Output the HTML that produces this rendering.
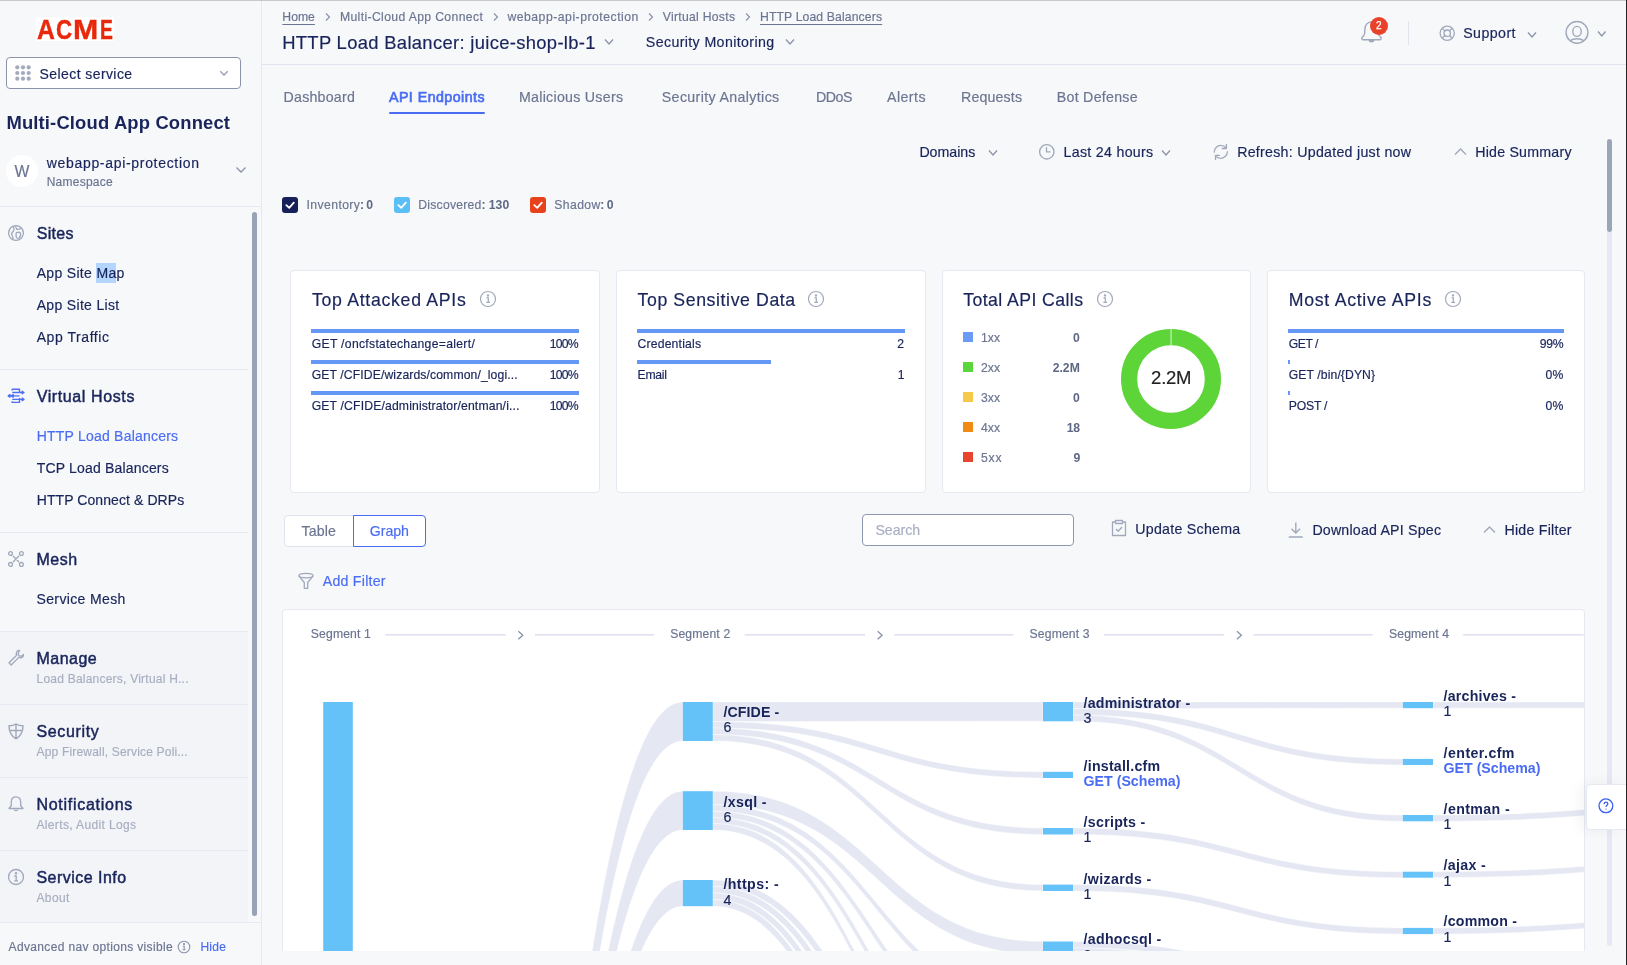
<!DOCTYPE html>
<html><head><meta charset="utf-8"><title>API Endpoints</title>
<style>
html,body{margin:0;padding:0;width:1627px;height:965px;overflow:hidden;background:#f7f8fa;}
body{position:relative;font-family:"Liberation Sans",sans-serif;}
.t{position:absolute;white-space:nowrap;}
svg text{font-family:"Liberation Sans",sans-serif;}
</style></head><body>
<div style="position:absolute;left:0px;top:0px;width:261px;height:965px;background:#f7f8fa;"></div>
<div style="position:absolute;left:0px;top:631px;width:248px;height:291px;background:#f3f4f8;"></div>
<div style="position:absolute;left:261px;top:0px;width:1px;height:965px;background:#e7e9f2;"></div>
<div style="position:absolute;left:36px;top:17px;width:78px;height:24px;background:#ffffff;"></div>
<div style="position:absolute;left:6px;top:57px;width:235px;height:32px;background:#ffffff;box-sizing:border-box;border:1px solid #8a93a9;border-radius:4px;"></div>
<svg style="position:absolute;left:14.8px;top:64.6px" width="17" height="17"><circle cx="2.3" cy="2.3" r="2.1" fill="#a3aabb"/><circle cx="8.0" cy="2.3" r="2.1" fill="#a3aabb"/><circle cx="13.7" cy="2.3" r="2.1" fill="#a3aabb"/><circle cx="2.3" cy="8.0" r="2.1" fill="#a3aabb"/><circle cx="8.0" cy="8.0" r="2.1" fill="#a3aabb"/><circle cx="13.7" cy="8.0" r="2.1" fill="#a3aabb"/><circle cx="2.3" cy="13.7" r="2.1" fill="#a3aabb"/><circle cx="8.0" cy="13.7" r="2.1" fill="#a3aabb"/><circle cx="13.7" cy="13.7" r="2.1" fill="#a3aabb"/></svg>
<svg style="position:absolute;left:218.9px;top:69.5px" width="11" height="7"><path d="M1.3 1.2 L5 5 L8.7 1.2" stroke="#949cb0" stroke-width="1.3" fill="none"/></svg>
<div style="position:absolute;left:6px;top:155px;width:32px;height:32px;background:#ffffff;border-radius:50%;"></div>
<svg style="position:absolute;left:235px;top:166px" width="12" height="9"><path d="M1.5 1.5 L6 6 L10.5 1.5" stroke="#8a93aa" stroke-width="1.3" fill="none"/></svg>
<div style="position:absolute;left:0px;top:206px;width:261px;height:1px;background:#e7e9f2;"></div>
<svg style="position:absolute;left:7px;top:224px" width="18" height="18" viewBox="0 0 18 18" fill="none" stroke="#a0a8bb" stroke-width="1.3" stroke-linejoin="round"><circle cx="9" cy="9" r="7.4"/><path d="M5.6 2.6 C7.2 3.8 7.6 5.6 6.2 7.3 C4.8 8.9 3.6 9.8 5.2 11.6 C6.2 12.7 6.2 14 5.9 15.6"/><path d="M8.4 1.7 C8.8 3.2 9.2 4.6 9.8 5.3 C11 5.6 12.6 5.2 14.2 4.2"/><path d="M9.3 8.6 C10.5 8.2 12.3 8.2 13.2 8.8 C13.9 10.2 13.3 12.8 12.2 14 C11 14.6 9.8 14.2 9.3 13.2 C9 11.6 9 10 9.3 8.6 Z"/></svg>
<div style="position:absolute;left:96px;top:263px;width:20px;height:20px;background:#b4d5fe;"></div>
<div style="position:absolute;left:0px;top:369px;width:248px;height:1px;background:#e7e9f2;"></div>
<svg style="position:absolute;left:7px;top:388px" width="18" height="16" viewBox="0 0 18 16" fill="none" stroke="#4f6ff5" stroke-width="1.4" stroke-linejoin="round"><path d="M5.2 2.6 V1.3 H12.5 V5.3 M5.2 4.5 H15.5 M12.5 7.9 H3 M5.2 11.4 H15.5 M5.2 13.2 V14.4 H12.5 V10"/><path d="M15.2 3.3 L17 4.5 L15.2 5.7 Z M15.2 10.2 L17 11.4 L15.2 12.6 Z M3 6.7 L1.2 7.9 L3 9.1 Z M6.2 6.7 L4.4 7.9 L6.2 9.1 Z" fill="#4f6ff5"/></svg>
<div style="position:absolute;left:0px;top:532px;width:248px;height:1px;background:#e7e9f2;"></div>
<svg style="position:absolute;left:7px;top:550px" width="18" height="18" viewBox="0 0 18 18" fill="none" stroke="#a0a8bb" stroke-width="1.3" stroke-linecap="round"><circle cx="3.5" cy="3.5" r="1.9"/><circle cx="14.4" cy="3.5" r="1.9"/><circle cx="3.5" cy="14.4" r="1.9"/><circle cx="14.4" cy="14.4" r="1.9"/><path d="M6.3 6.3 L11.7 11.7 M11.7 6.3 L6.3 11.7"/></svg>
<div style="position:absolute;left:0px;top:631px;width:248px;height:1px;background:#e7e9f2;"></div>
<svg style="position:absolute;left:7px;top:649px" width="18" height="18" viewBox="0 0 18 18" fill="none" stroke="#a0a8bb" stroke-width="1.3" stroke-linejoin="round"><path d="M12.5 1.5 C10.5 1.3 9 3 9.3 5 L9.6 6.2 L2 13.8 L4.2 16 L11.8 8.4 L13 8.7 C15 9 16.7 7.5 16.5 5.5 L14.3 7.2 L12.2 6.9 L11 5 L12.5 1.5 Z"/></svg>
<div style="position:absolute;left:0px;top:704px;width:248px;height:1px;background:#e7e9f2;"></div>
<svg style="position:absolute;left:7px;top:723px" width="18" height="17" viewBox="0 0 18 17" fill="none" stroke="#a0a8bb" stroke-width="1.4" stroke-linejoin="round"><path d="M9 1 C11.5 2.5 13.5 2.8 16 2.8 C16 9 14 13 9 15.8 C4 13 2 9 2 2.8 C4.5 2.8 6.5 2.5 9 1 Z M9 1.5 V15.5 M2.3 7.5 H15.7"/></svg>
<div style="position:absolute;left:0px;top:777px;width:248px;height:1px;background:#e7e9f2;"></div>
<svg style="position:absolute;left:7px;top:795px" width="18" height="18" viewBox="0 0 18 18" fill="none" stroke="#a0a8bb" stroke-width="1.3" stroke-linejoin="round"><path d="M9 1.8 C6 1.8 4.3 4 4.3 7 V10.5 L2 13.5 H16 L13.7 10.5 V7 C13.7 4 12 1.8 9 1.8 Z"/><path d="M7.3 14.5 C7.5 16 10.5 16 10.7 14.5" /></svg>
<div style="position:absolute;left:0px;top:850px;width:248px;height:1px;background:#e7e9f2;"></div>
<svg style="position:absolute;left:7px;top:868px" width="18" height="18" viewBox="0 0 18 18" fill="none" stroke="#a0a8bb" stroke-width="1.3"><circle cx="9" cy="9" r="7.5"/><path d="M7.3 8 H9.2 V12.8 M7.3 12.8 H11"/><circle cx="9" cy="5.3" r="0.6" fill="#a0a8bb"/></svg>
<div style="position:absolute;left:0px;top:922px;width:261px;height:1px;background:#e7e9f2;"></div>
<div style="position:absolute;left:0px;top:923px;width:261px;height:42px;background:#f7f8fa;"></div>
<svg style="position:absolute;left:176.5px;top:940px" width="14" height="14" viewBox="0 0 14 14" fill="none" stroke="#8a93aa" stroke-width="1.1"><circle cx="7" cy="7" r="5.8"/><path d="M5.8 6.2 H7.2 V9.8 M5.6 9.8 H8.6"/><circle cx="7" cy="4.1" r="0.5" fill="#8a93aa"/></svg>
<div style="position:absolute;left:252px;top:211.5px;width:5px;height:704px;background:#9aa3b6;border-radius:3px;"></div>
<div style="position:absolute;left:262px;top:0px;width:1365px;height:965px;background:#f7f8fa;"></div>
<div style="position:absolute;left:262px;top:64px;width:1365px;height:1px;background:#e1e4ee;"></div>
<div style="position:absolute;left:0px;top:0px;width:1627px;height:1px;background:#c9c9c9;"></div>
<svg style="position:absolute;left:323.5px;top:11.5px" width="8" height="10"><path d="M2 1.5 L5.5 5 L2 8.5" stroke="#8a93aa" stroke-width="1.2" fill="none"/></svg>
<svg style="position:absolute;left:491.5px;top:11.5px" width="8" height="10"><path d="M2 1.5 L5.5 5 L2 8.5" stroke="#8a93aa" stroke-width="1.2" fill="none"/></svg>
<svg style="position:absolute;left:647px;top:11.5px" width="8" height="10"><path d="M2 1.5 L5.5 5 L2 8.5" stroke="#8a93aa" stroke-width="1.2" fill="none"/></svg>
<svg style="position:absolute;left:743.5px;top:11.5px" width="8" height="10"><path d="M2 1.5 L5.5 5 L2 8.5" stroke="#8a93aa" stroke-width="1.2" fill="none"/></svg>
<svg style="position:absolute;left:603.5px;top:37.5px" width="10" height="8"><path d="M1 1.5 L5.0 6 L9 1.5" stroke="#8a93aa" stroke-width="1.3" fill="none"/></svg>
<svg style="position:absolute;left:785px;top:37.5px" width="10" height="8"><path d="M1 1.5 L5.0 6 L9 1.5" stroke="#8a93aa" stroke-width="1.3" fill="none"/></svg>
<svg style="position:absolute;left:1360px;top:21px" width="24" height="24" viewBox="0 0 24 24" fill="none" stroke="#a0a8bb" stroke-width="1.4" stroke-linejoin="round"><path d="M11.5 1 C8 1 5.3 3.5 5 7.5 L4.6 12.5 C4.5 14 3.5 15 2.2 16.3 C1.3 17.3 1.9 18.8 3.4 18.8 H19.6 C21.1 18.8 21.7 17.3 20.8 16.3 C19.5 15 18.5 14 18.4 12.5 L18 7.5 C17.7 3.5 15 1 11.5 1 Z"/><path d="M9.2 19.4 C9.5 21.4 13.5 21.4 13.8 19.4 Z" fill="#a0a8bb"/></svg>
<div style="position:absolute;left:1370px;top:16.7px;width:18px;height:18px;background:#e8432a;border-radius:50%;"></div>
<div style="position:absolute;left:1408.2px;top:21px;width:1px;height:24px;background:#e1e4ec;"></div>
<svg style="position:absolute;left:1437.5px;top:23.5px" width="18" height="18" viewBox="0 0 18 18" fill="none" stroke="#a0a8bb" stroke-width="1.3"><circle cx="9.2" cy="9.2" r="7.1"/><circle cx="9.2" cy="9.2" r="3.2"/><path d="M4.2 4.2 L6.9 6.9 M14.2 4.2 L11.5 6.9 M4.2 14.2 L6.9 11.5 M14.2 14.2 L11.5 11.5"/></svg>
<svg style="position:absolute;left:1527px;top:30.5px" width="10" height="8"><path d="M1 1.5 L5.0 6 L9 1.5" stroke="#8a93aa" stroke-width="1.3" fill="none"/></svg>
<svg style="position:absolute;left:1564px;top:20px" width="26" height="26" viewBox="0 0 26 26" fill="none" stroke="#a0a8bb" stroke-width="1.4"><circle cx="13" cy="12.4" r="10.9"/><ellipse cx="13" cy="11.4" rx="4.2" ry="5"/><path d="M6.3 20.6 C9.5 18.2 16.5 18.2 19.7 20.6"/></svg>
<svg style="position:absolute;left:1596.5px;top:29.5px" width="9.5" height="8"><path d="M1 1.5 L4.75 6 L8.5 1.5" stroke="#8a93aa" stroke-width="1.3" fill="none"/></svg>
<div style="position:absolute;left:389px;top:112px;width:96px;height:2.3px;background:#4a6cf3;border-radius:1px;"></div>
<svg style="position:absolute;left:987.5px;top:148.5px" width="10" height="8"><path d="M1 1.5 L5.0 6 L9 1.5" stroke="#8a93aa" stroke-width="1.3" fill="none"/></svg>
<svg style="position:absolute;left:1038px;top:143px" width="18" height="18" viewBox="0 0 18 18" fill="none" stroke="#a0a8bb" stroke-width="1.3" stroke-linecap="round"><circle cx="8.8" cy="8.8" r="7.2"/><path d="M8.5 4.6 V8.9 H12"/></svg>
<svg style="position:absolute;left:1161px;top:148.5px" width="10" height="8"><path d="M1 1.5 L5.0 6 L9 1.5" stroke="#8a93aa" stroke-width="1.3" fill="none"/></svg>
<svg style="position:absolute;left:1208px;top:140px" width="24" height="24" viewBox="0 0 24 24" fill="none" stroke="#a0a8bb" stroke-width="1.3" stroke-linecap="round" stroke-linejoin="round"><path d="M6.2 12.2 C6.5 8 9.5 5.3 12.5 5.3 C14.8 5.3 16.8 6.3 18 7.8 M18.4 4.5 V8.5 H14.2 M19.4 11.7 C19.2 15.8 16 18.3 12.5 18.3 C10.5 18.3 8.8 17.4 7.8 16.2 M11.4 15.4 H7.5 V19.4"/></svg>
<svg style="position:absolute;left:1454px;top:147px" width="14" height="9"><path d="M1 7.5 L6.5 2 L12 7.5" stroke="#a0a8bb" stroke-width="1.4" fill="none"/></svg>
<div style="position:absolute;left:282.1px;top:197px;width:16px;height:16px;border-radius:3px;background:#16215a"></div>
<svg style="position:absolute;left:282.1px;top:197px" width="16" height="16"><path d="M4.3 8.2 L7.2 10.8 L11.8 5.6" stroke="#fff" stroke-width="1.8" fill="none" stroke-linecap="round" stroke-linejoin="round"/></svg>
<div style="position:absolute;left:394.2px;top:197px;width:16px;height:16px;border-radius:3px;background:#5bbff7"></div>
<svg style="position:absolute;left:394.2px;top:197px" width="16" height="16"><path d="M4.3 8.2 L7.2 10.8 L11.8 5.6" stroke="#fff" stroke-width="1.8" fill="none" stroke-linecap="round" stroke-linejoin="round"/></svg>
<div style="position:absolute;left:530.3px;top:197px;width:16px;height:16px;border-radius:3px;background:#e8421d"></div>
<svg style="position:absolute;left:530.3px;top:197px" width="16" height="16"><path d="M4.3 8.2 L7.2 10.8 L11.8 5.6" stroke="#fff" stroke-width="1.8" fill="none" stroke-linecap="round" stroke-linejoin="round"/></svg>
<div style="position:absolute;left:290px;top:270px;width:310px;height:223px;background:#ffffff;box-sizing:border-box;border:1px solid #e6e9f1;border-radius:4px;"></div>
<div style="position:absolute;left:616px;top:270px;width:310px;height:223px;background:#ffffff;box-sizing:border-box;border:1px solid #e6e9f1;border-radius:4px;"></div>
<div style="position:absolute;left:942px;top:270px;width:309px;height:223px;background:#ffffff;box-sizing:border-box;border:1px solid #e6e9f1;border-radius:4px;"></div>
<div style="position:absolute;left:1267px;top:270px;width:318px;height:223px;background:#ffffff;box-sizing:border-box;border:1px solid #e6e9f1;border-radius:4px;"></div>
<svg style="position:absolute;left:478.7px;top:290px" width="18" height="18" viewBox="0 0 18 18" fill="none" stroke="#a0a8bb" stroke-width="1.2"><circle cx="9" cy="9" r="7.5"/><path d="M7.5 7.8 H9.3 V12.3 M7.3 12.3 H11"/><circle cx="9" cy="5.4" r="0.6" fill="#a0a8bb"/></svg>
<div style="position:absolute;left:311px;top:329px;width:268px;height:4px;background:#6597f6;"></div>
<div style="position:absolute;left:311px;top:360px;width:268px;height:4px;background:#6597f6;"></div>
<div style="position:absolute;left:311px;top:391px;width:268px;height:4px;background:#6597f6;"></div>
<svg style="position:absolute;left:807.3px;top:290px" width="18" height="18" viewBox="0 0 18 18" fill="none" stroke="#a0a8bb" stroke-width="1.2"><circle cx="9" cy="9" r="7.5"/><path d="M7.5 7.8 H9.3 V12.3 M7.3 12.3 H11"/><circle cx="9" cy="5.4" r="0.6" fill="#a0a8bb"/></svg>
<div style="position:absolute;left:637px;top:329px;width:268px;height:4px;background:#6597f6;"></div>
<div style="position:absolute;left:637px;top:360px;width:134px;height:4px;background:#6597f6;"></div>
<svg style="position:absolute;left:1095.6px;top:290px" width="18" height="18" viewBox="0 0 18 18" fill="none" stroke="#a0a8bb" stroke-width="1.2"><circle cx="9" cy="9" r="7.5"/><path d="M7.5 7.8 H9.3 V12.3 M7.3 12.3 H11"/><circle cx="9" cy="5.4" r="0.6" fill="#a0a8bb"/></svg>
<div style="position:absolute;left:963px;top:332px;width:10px;height:10px;background:#6a9bf6;"></div>
<div style="position:absolute;left:963px;top:362px;width:10px;height:10px;background:#5bd63a;"></div>
<div style="position:absolute;left:963px;top:392px;width:10px;height:10px;background:#f6c94b;"></div>
<div style="position:absolute;left:963px;top:422px;width:10px;height:10px;background:#f08a12;"></div>
<div style="position:absolute;left:963px;top:452px;width:10px;height:10px;background:#e8452f;"></div>
<svg style="position:absolute;left:1121px;top:328.7px" width="100" height="100" viewBox="0 0 100 100"><circle cx="50" cy="50" r="41.9" fill="none" stroke="#5dd539" stroke-width="16.2"/><rect x="49.6" y="0" width="0.9" height="17" fill="#e8f7e2"/></svg>
<svg style="position:absolute;left:1444px;top:290px" width="18" height="18" viewBox="0 0 18 18" fill="none" stroke="#a0a8bb" stroke-width="1.2"><circle cx="9" cy="9" r="7.5"/><path d="M7.5 7.8 H9.3 V12.3 M7.3 12.3 H11"/><circle cx="9" cy="5.4" r="0.6" fill="#a0a8bb"/></svg>
<div style="position:absolute;left:1288px;top:329px;width:276px;height:4px;background:#6597f6;"></div>
<div style="position:absolute;left:1288px;top:360px;width:2px;height:4px;background:#6597f6;"></div>
<div style="position:absolute;left:1288px;top:391px;width:2px;height:4px;background:#6597f6;"></div>
<div style="position:absolute;left:283.7px;top:515.1px;width:142.2px;height:31.5px;background:#ffffff;box-sizing:border-box;border:1px solid #e0e3ee;border-radius:4px;"></div>
<div style="position:absolute;left:353.1px;top:515.1px;width:72.8px;height:31.5px;background:#ffffff;box-sizing:border-box;border:1.5px solid #4a6cf3;border-radius:0 4px 4px 0;"></div>
<svg style="position:absolute;left:297px;top:572px" width="18" height="18" viewBox="0 0 18 18" fill="none" stroke="#a0a8bb" stroke-width="1.3" stroke-linejoin="round"><ellipse cx="9" cy="3.6" rx="7.2" ry="2.3"/><path d="M1.8 3.8 L7.3 10.5 V16.3 H10.7 V10.5 L16.2 3.8"/></svg>
<div style="position:absolute;left:862.4px;top:514.3px;width:211.4px;height:31.3px;background:#ffffff;box-sizing:border-box;border:1px solid #8f98ae;border-radius:4px;"></div>
<svg style="position:absolute;left:1110px;top:519px" width="18" height="18" viewBox="0 0 18 18" fill="none" stroke="#a0a8bb" stroke-width="1.3" stroke-linejoin="round"><path d="M5.5 3 H2.5 V16.5 H15.5 V3 H12.5"/><rect x="5.5" y="1.5" width="7" height="3"/><path d="M6 10 L8.2 12.2 L12 8"/></svg>
<svg style="position:absolute;left:1287px;top:521px" width="18" height="18" viewBox="0 0 18 18" fill="none" stroke="#a0a8bb" stroke-width="1.4"><path d="M8.8 1.5 V12 M4.5 7.8 L8.8 12 L13.1 7.8 M1.8 16 H15.8"/></svg>
<svg style="position:absolute;left:1483px;top:525px" width="14" height="9"><path d="M1 7.5 L6.5 2 L12 7.5" stroke="#a0a8bb" stroke-width="1.4" fill="none"/></svg>
<div style="position:absolute;left:282px;top:609px;width:1303px;height:341.9px;overflow:hidden;background:#fff;border:1px solid #e6e9f1;border-bottom:none;box-sizing:border-box;border-radius:4px 4px 0 0"><svg style="position:absolute;left:-283px;top:-610px" width="1627" height="965"><g fill="#e5e8f3" stroke="#ffffff" stroke-width="0.4"><path d="M352.80 2609.59 C517.80 2609.59 517.80 702.00 682.80 702.00 L682.80 741.00 C517.80 741.00 517.80 2707.10 352.80 2707.10 Z"/><path d="M352.80 2685.49 C517.80 2685.49 517.80 791.20 682.80 791.20 L682.80 830.00 C517.80 830.00 517.80 2710.82 352.80 2710.82 Z"/><path d="M352.80 2719.17 C517.80 2719.17 517.80 880.00 682.80 880.00 L682.80 906.20 C517.80 906.20 517.80 2811.35 352.80 2811.35 Z"/><path d="M712.80 702.00 C877.90 702.00 877.90 702.00 1043.00 702.00 L1043.00 721.30 C877.90 721.30 877.90 721.50 712.80 721.50 Z"/><path d="M712.80 721.50 C877.90 721.50 877.90 771.80 1043.00 771.80 L1043.00 778.00 C877.90 778.00 877.90 728.00 712.80 728.00 Z"/><path d="M712.80 728.00 C877.90 728.00 877.90 828.00 1043.00 828.00 L1043.00 834.50 C877.90 834.50 877.90 734.50 712.80 734.50 Z"/><path d="M712.80 734.50 C877.90 734.50 877.90 884.60 1043.00 884.60 L1043.00 891.00 C877.90 891.00 877.90 741.00 712.80 741.00 Z"/><path d="M712.80 791.20 C877.90 791.20 877.90 941.50 1043.00 941.50 L1043.00 954.50 C877.90 954.50 877.90 804.70 712.80 804.70 Z"/><path d="M712.80 804.70 C877.90 804.70 877.90 1003.91 1043.00 1003.91 L1043.00 1010.64 C877.90 1010.64 877.90 811.20 712.80 811.20 Z"/><path d="M712.80 811.20 C877.90 811.20 877.90 1060.79 1043.00 1060.79 L1043.00 1069.54 C877.90 1069.54 877.90 817.30 712.80 817.30 Z"/><path d="M712.80 817.30 C877.90 817.30 877.90 1116.66 1043.00 1116.66 L1043.00 1127.22 C877.90 1127.22 877.90 823.50 712.80 823.50 Z"/><path d="M712.80 823.50 C877.90 823.50 877.90 1175.34 1043.00 1175.34 L1043.00 1185.26 C877.90 1185.26 877.90 830.00 712.80 830.00 Z"/><path d="M712.80 880.00 C877.90 880.00 877.90 1230.81 1043.00 1230.81 L1043.00 1258.75 C877.90 1258.75 877.90 886.50 712.80 886.50 Z"/><path d="M712.80 886.50 C877.90 886.50 877.90 1287.64 1043.00 1287.64 L1043.00 1314.84 C877.90 1314.84 877.90 893.00 712.80 893.00 Z"/><path d="M712.80 893.00 C877.90 893.00 877.90 1352.16 1043.00 1352.16 L1043.00 1383.39 C877.90 1383.39 877.90 899.60 712.80 899.60 Z"/><path d="M712.80 899.60 C877.90 899.60 877.90 1413.60 1043.00 1413.60 L1043.00 1448.38 C877.90 1448.38 877.90 906.20 712.80 906.20 Z"/><path d="M1073.00 702.00 C1237.90 702.00 1237.90 702.00 1402.80 702.00 L1402.80 708.20 C1237.90 708.20 1237.90 708.50 1073.00 708.50 Z"/><path d="M1073.00 708.50 C1237.90 708.50 1237.90 758.90 1402.80 758.90 L1402.80 765.00 C1237.90 765.00 1237.90 715.00 1073.00 715.00 Z"/><path d="M1073.00 715.00 C1237.90 715.00 1237.90 815.00 1402.80 815.00 L1402.80 821.30 C1237.90 821.30 1237.90 721.30 1073.00 721.30 Z"/><path d="M1073.00 828.00 C1237.90 828.00 1237.90 871.70 1402.80 871.70 L1402.80 877.70 C1237.90 877.70 1237.90 834.50 1073.00 834.50 Z"/><path d="M1073.00 884.60 C1237.90 884.60 1237.90 927.90 1402.80 927.90 L1402.80 934.10 C1237.90 934.10 1237.90 891.00 1073.00 891.00 Z"/><path d="M1073.00 941.50 C1237.90 941.50 1237.90 985.73 1402.80 985.73 L1402.80 992.23 C1237.90 992.23 1237.90 948.00 1073.00 948.00 Z"/><path d="M1073.00 948.00 C1237.90 948.00 1237.90 1005.39 1402.80 1005.39 L1402.80 1011.89 C1237.90 1011.89 1237.90 954.50 1073.00 954.50 Z"/><path d="M1433.00 702.00 C1597.80 702.00 1597.80 702.00 1762.60 702.00 L1762.60 708.20 C1597.80 708.20 1597.80 708.20 1433.00 708.20 Z"/><path d="M1433.00 815.00 C1597.80 815.00 1597.80 801.80 1762.60 801.80 L1762.60 808.10 C1597.80 808.10 1597.80 821.30 1433.00 821.30 Z"/><path d="M1433.00 871.70 C1597.80 871.70 1597.80 858.50 1762.60 858.50 L1762.60 864.50 C1597.80 864.50 1597.80 877.70 1433.00 877.70 Z"/><path d="M1433.00 927.90 C1597.80 927.90 1597.80 914.70 1762.60 914.70 L1762.60 920.90 C1597.80 920.90 1597.80 934.10 1433.00 934.10 Z"/></g><g fill="#64c2f9"><rect x="323.20" y="702.00" width="29.60" height="498.00"/><rect x="682.80" y="702.00" width="30.00" height="39.00"/><rect x="682.80" y="791.20" width="30.00" height="38.80"/><rect x="682.80" y="880.00" width="30.00" height="26.20"/><rect x="1043.00" y="702.00" width="30.00" height="19.30"/><rect x="1043.00" y="771.80" width="30.00" height="6.20"/><rect x="1043.00" y="828.00" width="30.00" height="6.50"/><rect x="1043.00" y="884.60" width="30.00" height="6.40"/><rect x="1043.00" y="941.50" width="30.00" height="13.00"/><rect x="1402.80" y="702.00" width="30.20" height="6.20"/><rect x="1402.80" y="758.90" width="30.20" height="6.10"/><rect x="1402.80" y="815.00" width="30.20" height="6.30"/><rect x="1402.80" y="871.70" width="30.20" height="6.00"/><rect x="1402.80" y="927.90" width="30.20" height="6.20"/></g><rect x="385.3" y="634" width="120.4" height="1.6" fill="#dfe2ee"/><rect x="535.0" y="634" width="119.0" height="1.6" fill="#dfe2ee"/><path d="M518.3 631.2 L522.8 635.2 L518.3 639.2" stroke="#8a93aa" stroke-width="1.3" fill="none"/><rect x="744.6" y="634" width="120.4" height="1.6" fill="#dfe2ee"/><rect x="894.3" y="634" width="119.0" height="1.6" fill="#dfe2ee"/><path d="M877.6 631.2 L882.1 635.2 L877.6 639.2" stroke="#8a93aa" stroke-width="1.3" fill="none"/><rect x="1103.9" y="634" width="120.4" height="1.6" fill="#dfe2ee"/><rect x="1253.6" y="634" width="119.0" height="1.6" fill="#dfe2ee"/><path d="M1236.9 631.2 L1241.4 635.2 L1236.9 639.2" stroke="#8a93aa" stroke-width="1.3" fill="none"/><rect x="1463.2" y="634" width="120.4" height="1.6" fill="#dfe2ee"/></svg></div>
<div style="position:absolute;left:1607px;top:231.7px;width:5px;height:714.5px;background:#e6e9f3;border-radius:0 0 3px 3px;"></div>
<div style="position:absolute;left:1607px;top:138.9px;width:5px;height:93px;background:#9ca4b7;border-radius:3px;"></div>
<div style="position:absolute;left:0;top:0;width:1627px;height:965px;will-change:transform"><div id="t0" class="t" style="left:37.20px;top:15.80px;font-size:28.00px;line-height:28.00px;color:#e8280b;font-weight:700;letter-spacing:-1.671px;transform:scaleX(0.885);transform-origin:0 0;-webkit-text-stroke:0.4px #e8280b;">A</div>
<div id="t1" class="t" style="left:56.30px;top:15.80px;font-size:28.00px;line-height:28.00px;color:#e8280b;font-weight:700;letter-spacing:0.411px;transform:scaleX(0.800);transform-origin:0 0;-webkit-text-stroke:0.4px #e8280b;">C</div>
<div id="t2" class="t" style="left:72.60px;top:15.80px;font-size:28.00px;line-height:28.00px;color:#e8280b;font-weight:700;letter-spacing:0.165px;transform:scaleX(1.080);transform-origin:0 0;-webkit-text-stroke:0.4px #e8280b;">M</div>
<div id="t3" class="t" style="left:99.80px;top:15.81px;font-size:28.00px;line-height:28.00px;color:#e8280b;font-weight:700;letter-spacing:0.000px;transform:scaleX(0.690);transform-origin:0 0;-webkit-text-stroke:0.4px #e8280b;">E</div>
<div id="t4" class="t" style="left:39.60px;top:67.01px;font-size:14.00px;line-height:14.00px;color:#18245a;font-weight:400;letter-spacing:0.412px;-webkit-text-stroke:0.18px #18245a;">Select service</div>
<div id="t5" class="t" style="left:6.40px;top:114.20px;font-size:18.40px;line-height:18.40px;color:#18245a;font-weight:700;letter-spacing:0.165px;">Multi-Cloud App Connect</div>
<div id="t6" class="t" style="left:22.20px;transform:translateX(-50%);top:163.81px;font-size:15.80px;line-height:15.80px;color:#6b7591;font-weight:400;letter-spacing:0.306px;-webkit-text-stroke:0.18px #6b7591;">W</div>
<div id="t7" class="t" style="left:46.70px;top:156.00px;font-size:14.00px;line-height:14.00px;color:#18245a;font-weight:400;letter-spacing:0.688px;-webkit-text-stroke:0.18px #18245a;">webapp-api-protection</div>
<div id="t8" class="t" style="left:46.70px;top:176.01px;font-size:12.00px;line-height:12.00px;color:#6b7591;font-weight:400;letter-spacing:0.245px;-webkit-text-stroke:0.18px #6b7591;">Namespace</div>
<div id="t9" class="t" style="left:36.70px;top:225.91px;font-size:16.00px;line-height:16.00px;color:#18245a;font-weight:400;letter-spacing:0.306px;-webkit-text-stroke:0.45px #18245a;">Sites</div>
<div id="t10" class="t" style="left:36.70px;top:266.10px;font-size:14.00px;line-height:14.00px;color:#18245a;font-weight:400;letter-spacing:0.323px;-webkit-text-stroke:0.18px #18245a;">App Site Map</div>
<div id="t11" class="t" style="left:36.70px;top:298.01px;font-size:14.00px;line-height:14.00px;color:#18245a;font-weight:400;letter-spacing:0.325px;-webkit-text-stroke:0.18px #18245a;">App Site List</div>
<div id="t12" class="t" style="left:36.70px;top:329.91px;font-size:14.00px;line-height:14.00px;color:#18245a;font-weight:400;letter-spacing:0.562px;-webkit-text-stroke:0.18px #18245a;">App Traffic</div>
<div id="t13" class="t" style="left:36.70px;top:388.81px;font-size:16.00px;line-height:16.00px;color:#18245a;font-weight:400;letter-spacing:0.607px;-webkit-text-stroke:0.45px #18245a;">Virtual Hosts</div>
<div id="t14" class="t" style="left:36.70px;top:429.02px;font-size:14.00px;line-height:14.00px;color:#4a6cf3;font-weight:400;letter-spacing:0.218px;-webkit-text-stroke:0.18px #4a6cf3;">HTTP Load Balancers</div>
<div id="t15" class="t" style="left:36.70px;top:460.60px;font-size:14.00px;line-height:14.00px;color:#18245a;font-weight:400;letter-spacing:0.181px;-webkit-text-stroke:0.18px #18245a;">TCP Load Balancers</div>
<div id="t16" class="t" style="left:36.70px;top:492.52px;font-size:14.00px;line-height:14.00px;color:#18245a;font-weight:400;letter-spacing:0.083px;-webkit-text-stroke:0.18px #18245a;">HTTP Connect &amp; DRPs</div>
<div id="t17" class="t" style="left:36.50px;top:551.91px;font-size:16.00px;line-height:16.00px;color:#18245a;font-weight:400;letter-spacing:0.520px;-webkit-text-stroke:0.45px #18245a;">Mesh</div>
<div id="t18" class="t" style="left:36.50px;top:592.01px;font-size:14.00px;line-height:14.00px;color:#18245a;font-weight:400;letter-spacing:0.371px;-webkit-text-stroke:0.18px #18245a;">Service Mesh</div>
<div id="t19" class="t" style="left:36.50px;top:650.91px;font-size:16.00px;line-height:16.00px;color:#18245a;font-weight:400;letter-spacing:0.473px;-webkit-text-stroke:0.45px #18245a;">Manage</div>
<div id="t20" class="t" style="left:36.50px;top:672.70px;font-size:12.00px;line-height:12.00px;color:#a7aec0;font-weight:400;letter-spacing:0.227px;-webkit-text-stroke:0.18px #a7aec0;">Load Balancers, Virtual H...</div>
<div id="t21" class="t" style="left:36.50px;top:724.00px;font-size:16.00px;line-height:16.00px;color:#18245a;font-weight:400;letter-spacing:0.629px;-webkit-text-stroke:0.45px #18245a;">Security</div>
<div id="t22" class="t" style="left:36.50px;top:746.41px;font-size:12.00px;line-height:12.00px;color:#a7aec0;font-weight:400;letter-spacing:0.184px;-webkit-text-stroke:0.18px #a7aec0;">App Firewall, Service Poli...</div>
<div id="t23" class="t" style="left:36.40px;top:797.11px;font-size:16.00px;line-height:16.00px;color:#18245a;font-weight:400;letter-spacing:0.728px;-webkit-text-stroke:0.45px #18245a;">Notifications</div>
<div id="t24" class="t" style="left:36.40px;top:819.30px;font-size:12.00px;line-height:12.00px;color:#a7aec0;font-weight:400;letter-spacing:0.371px;-webkit-text-stroke:0.18px #a7aec0;">Alerts, Audit Logs</div>
<div id="t25" class="t" style="left:36.40px;top:870.00px;font-size:16.00px;line-height:16.00px;color:#18245a;font-weight:400;letter-spacing:0.482px;-webkit-text-stroke:0.45px #18245a;">Service Info</div>
<div id="t26" class="t" style="left:36.40px;top:891.80px;font-size:12.00px;line-height:12.00px;color:#a7aec0;font-weight:400;letter-spacing:0.410px;-webkit-text-stroke:0.18px #a7aec0;">About</div>
<div id="t27" class="t" style="left:8.60px;top:941.21px;font-size:12.00px;line-height:12.00px;color:#6b7591;font-weight:400;letter-spacing:0.342px;-webkit-text-stroke:0.18px #6b7591;">Advanced nav options visible</div>
<div id="t28" class="t" style="left:200.40px;top:941.21px;font-size:12.00px;line-height:12.00px;color:#4a6cf3;font-weight:400;letter-spacing:0.271px;-webkit-text-stroke:0.18px #4a6cf3;">Hide</div>
<div id="t29" class="t" style="left:282.30px;top:10.71px;font-size:12.20px;line-height:12.20px;color:#6b7591;font-weight:400;letter-spacing:0.028px;text-decoration:underline;text-underline-offset:2.5px;-webkit-text-stroke:0.18px #6b7591;">Home</div>
<div id="t30" class="t" style="left:339.90px;top:10.71px;font-size:12.20px;line-height:12.20px;color:#6b7591;font-weight:400;letter-spacing:0.367px;-webkit-text-stroke:0.18px #6b7591;">Multi-Cloud App Connect</div>
<div id="t31" class="t" style="left:507.40px;top:10.70px;font-size:12.20px;line-height:12.20px;color:#6b7591;font-weight:400;letter-spacing:0.520px;-webkit-text-stroke:0.18px #6b7591;">webapp-api-protection</div>
<div id="t32" class="t" style="left:662.80px;top:10.71px;font-size:12.20px;line-height:12.20px;color:#6b7591;font-weight:400;letter-spacing:0.277px;-webkit-text-stroke:0.18px #6b7591;">Virtual Hosts</div>
<div id="t33" class="t" style="left:760.00px;top:10.72px;font-size:12.20px;line-height:12.20px;color:#6b7591;font-weight:400;letter-spacing:0.128px;text-decoration:underline;text-underline-offset:2.5px;-webkit-text-stroke:0.18px #6b7591;">HTTP Load Balancers</div>
<div id="t34" class="t" style="left:282.20px;top:34.21px;font-size:18.40px;line-height:18.40px;color:#18245a;font-weight:400;letter-spacing:0.325px;-webkit-text-stroke:0.18px #18245a;">HTTP Load Balancer: juice-shop-lb-1</div>
<div id="t35" class="t" style="left:645.80px;top:35.21px;font-size:14.20px;line-height:14.20px;color:#18245a;font-weight:400;letter-spacing:0.381px;-webkit-text-stroke:0.18px #18245a;">Security Monitoring</div>
<div id="t36" class="t" style="left:1379.00px;transform:translateX(-50%);top:21.31px;font-size:10.00px;line-height:10.00px;color:#ffffff;font-weight:400;letter-spacing:0.474px;-webkit-text-stroke:0.25px #fff;">2</div>
<div id="t37" class="t" style="left:1463.20px;top:26.10px;font-size:14.20px;line-height:14.20px;color:#18245a;font-weight:400;letter-spacing:0.433px;-webkit-text-stroke:0.18px #18245a;">Support</div>
<div id="t38" class="t" style="left:283.60px;top:90.31px;font-size:14.20px;line-height:14.20px;color:#6b7591;font-weight:400;letter-spacing:0.223px;-webkit-text-stroke:0.18px #6b7591;">Dashboard</div>
<div id="t39" class="t" style="left:389.00px;top:90.31px;font-size:14.20px;line-height:14.20px;color:#4a6cf3;font-weight:400;letter-spacing:0.473px;-webkit-text-stroke:0.65px #4a6cf3;">API Endpoints</div>
<div id="t40" class="t" style="left:519.00px;top:90.31px;font-size:14.20px;line-height:14.20px;color:#6b7591;font-weight:400;letter-spacing:0.277px;-webkit-text-stroke:0.18px #6b7591;">Malicious Users</div>
<div id="t41" class="t" style="left:661.80px;top:90.31px;font-size:14.20px;line-height:14.20px;color:#6b7591;font-weight:400;letter-spacing:0.365px;-webkit-text-stroke:0.18px #6b7591;">Security Analytics</div>
<div id="t42" class="t" style="left:816.00px;top:90.31px;font-size:14.20px;line-height:14.20px;color:#6b7591;font-weight:400;letter-spacing:-0.451px;-webkit-text-stroke:0.18px #6b7591;">DDoS</div>
<div id="t43" class="t" style="left:887.00px;top:90.31px;font-size:14.20px;line-height:14.20px;color:#6b7591;font-weight:400;letter-spacing:0.446px;-webkit-text-stroke:0.18px #6b7591;">Alerts</div>
<div id="t44" class="t" style="left:961.00px;top:90.31px;font-size:14.20px;line-height:14.20px;color:#6b7591;font-weight:400;letter-spacing:0.151px;-webkit-text-stroke:0.18px #6b7591;">Requests</div>
<div id="t45" class="t" style="left:1056.80px;top:90.32px;font-size:14.20px;line-height:14.20px;color:#6b7591;font-weight:400;letter-spacing:0.272px;-webkit-text-stroke:0.18px #6b7591;">Bot Defense</div>
<div id="t46" class="t" style="left:919.40px;top:145.21px;font-size:14.20px;line-height:14.20px;color:#18245a;font-weight:400;letter-spacing:-0.015px;-webkit-text-stroke:0.18px #18245a;">Domains</div>
<div id="t47" class="t" style="left:1063.50px;top:145.20px;font-size:14.20px;line-height:14.20px;color:#18245a;font-weight:400;letter-spacing:0.310px;-webkit-text-stroke:0.18px #18245a;">Last 24 hours</div>
<div id="t48" class="t" style="left:1237.20px;top:145.31px;font-size:14.20px;line-height:14.20px;color:#18245a;font-weight:400;letter-spacing:0.275px;-webkit-text-stroke:0.18px #18245a;">Refresh: Updated just now</div>
<div id="t49" class="t" style="left:1475.20px;top:145.31px;font-size:14.20px;line-height:14.20px;color:#18245a;font-weight:400;letter-spacing:0.225px;-webkit-text-stroke:0.18px #18245a;">Hide Summary</div>
<div id="t50" class="t" style="left:306.60px;top:198.90px;font-size:12.20px;line-height:12.20px;color:#6b7591;font-weight:400;letter-spacing:0.395px;-webkit-text-stroke:0.18px #6b7591;">Inventory</div>
<div id="t51" class="t" style="left:359.90px;top:198.90px;font-size:12.20px;line-height:12.20px;color:#5e6884;font-weight:700;letter-spacing:-0.567px;">: 0</div>
<div id="t52" class="t" style="left:418.30px;top:198.90px;font-size:12.20px;line-height:12.20px;color:#6b7591;font-weight:400;letter-spacing:0.236px;-webkit-text-stroke:0.18px #6b7591;">Discovered</div>
<div id="t53" class="t" style="left:481.40px;top:198.91px;font-size:12.20px;line-height:12.20px;color:#5e6884;font-weight:700;letter-spacing:0.002px;">: 130</div>
<div id="t54" class="t" style="left:554.30px;top:198.91px;font-size:12.20px;line-height:12.20px;color:#6b7591;font-weight:400;letter-spacing:0.389px;-webkit-text-stroke:0.18px #6b7591;">Shadow</div>
<div id="t55" class="t" style="left:600.30px;top:198.91px;font-size:12.20px;line-height:12.20px;color:#5e6884;font-weight:700;letter-spacing:-0.516px;">: 0</div>
<div id="t56" class="t" style="left:312.00px;top:291.81px;font-size:17.70px;line-height:17.70px;color:#18245a;font-weight:400;letter-spacing:0.701px;-webkit-text-stroke:0.18px #18245a;">Top Attacked APIs</div>
<div id="t57" class="t" style="left:311.70px;top:337.81px;font-size:12.20px;line-height:12.20px;color:#18245a;font-weight:400;letter-spacing:0.301px;-webkit-text-stroke:0.18px #18245a;">GET /oncfstatechange=alert/</div>
<div id="t58" class="t" style="right:1049.20px;top:337.81px;font-size:12.20px;line-height:12.20px;color:#18245a;font-weight:400;letter-spacing:-0.795px;-webkit-text-stroke:0.18px #18245a;">100%</div>
<div id="t59" class="t" style="left:311.70px;top:368.91px;font-size:12.20px;line-height:12.20px;color:#18245a;font-weight:400;letter-spacing:0.110px;-webkit-text-stroke:0.18px #18245a;">GET /CFIDE/wizards/common/_logi...</div>
<div id="t60" class="t" style="right:1049.20px;top:368.91px;font-size:12.20px;line-height:12.20px;color:#18245a;font-weight:400;letter-spacing:-0.791px;-webkit-text-stroke:0.18px #18245a;">100%</div>
<div id="t61" class="t" style="left:311.70px;top:399.81px;font-size:12.20px;line-height:12.20px;color:#18245a;font-weight:400;letter-spacing:0.157px;-webkit-text-stroke:0.18px #18245a;">GET /CFIDE/administrator/entman/i...</div>
<div id="t62" class="t" style="right:1049.20px;top:399.81px;font-size:12.20px;line-height:12.20px;color:#18245a;font-weight:400;letter-spacing:-0.791px;-webkit-text-stroke:0.18px #18245a;">100%</div>
<div id="t63" class="t" style="left:637.50px;top:291.81px;font-size:17.70px;line-height:17.70px;color:#18245a;font-weight:400;letter-spacing:0.601px;-webkit-text-stroke:0.18px #18245a;">Top Sensitive Data</div>
<div id="t64" class="t" style="left:637.50px;top:337.81px;font-size:12.20px;line-height:12.20px;color:#18245a;font-weight:400;letter-spacing:0.184px;-webkit-text-stroke:0.18px #18245a;">Credentials</div>
<div id="t65" class="t" style="right:722.50px;top:337.81px;font-size:12.20px;line-height:12.20px;color:#18245a;font-weight:400;letter-spacing:0.404px;-webkit-text-stroke:0.18px #18245a;">2</div>
<div id="t66" class="t" style="left:637.50px;top:368.91px;font-size:12.20px;line-height:12.20px;color:#18245a;font-weight:400;letter-spacing:-0.246px;-webkit-text-stroke:0.18px #18245a;">Email</div>
<div id="t67" class="t" style="right:722.50px;top:368.91px;font-size:12.20px;line-height:12.20px;color:#18245a;font-weight:400;letter-spacing:0.000px;-webkit-text-stroke:0.18px #18245a;">1</div>
<div id="t68" class="t" style="left:963.30px;top:291.81px;font-size:17.70px;line-height:17.70px;color:#18245a;font-weight:400;letter-spacing:0.404px;-webkit-text-stroke:0.18px #18245a;">Total API Calls</div>
<div id="t69" class="t" style="left:981.10px;top:331.81px;font-size:12.20px;line-height:12.20px;color:#6b7591;font-weight:400;letter-spacing:0.000px;-webkit-text-stroke:0.18px #6b7591;">1xx</div>
<div id="t70" class="t" style="right:547.20px;top:331.81px;font-size:12.20px;line-height:12.20px;color:#5e6884;font-weight:700;letter-spacing:0.000px;">0</div>
<div id="t71" class="t" style="left:981.10px;top:361.81px;font-size:12.20px;line-height:12.20px;color:#6b7591;font-weight:400;letter-spacing:0.000px;-webkit-text-stroke:0.18px #6b7591;">2xx</div>
<div id="t72" class="t" style="right:547.20px;top:361.81px;font-size:12.20px;line-height:12.20px;color:#5e6884;font-weight:700;letter-spacing:0.000px;">2.2M</div>
<div id="t73" class="t" style="left:981.10px;top:391.81px;font-size:12.20px;line-height:12.20px;color:#6b7591;font-weight:400;letter-spacing:0.000px;-webkit-text-stroke:0.18px #6b7591;">3xx</div>
<div id="t74" class="t" style="right:547.20px;top:391.81px;font-size:12.20px;line-height:12.20px;color:#5e6884;font-weight:700;letter-spacing:0.000px;">0</div>
<div id="t75" class="t" style="left:981.10px;top:421.81px;font-size:12.20px;line-height:12.20px;color:#6b7591;font-weight:400;letter-spacing:0.000px;-webkit-text-stroke:0.18px #6b7591;">4xx</div>
<div id="t76" class="t" style="right:547.20px;top:421.82px;font-size:12.20px;line-height:12.20px;color:#5e6884;font-weight:700;letter-spacing:-0.243px;">18</div>
<div id="t77" class="t" style="left:981.10px;top:451.81px;font-size:12.20px;line-height:12.20px;color:#6b7591;font-weight:400;letter-spacing:0.718px;-webkit-text-stroke:0.18px #6b7591;">5xx</div>
<div id="t78" class="t" style="right:547.20px;top:451.81px;font-size:12.20px;line-height:12.20px;color:#5e6884;font-weight:700;letter-spacing:-0.480px;">9</div>
<div id="t79" class="t" style="left:1171.20px;transform:translateX(-50%);top:369.01px;font-size:18.50px;line-height:18.50px;color:#222222;font-weight:400;letter-spacing:-0.247px;-webkit-text-stroke:0.18px #222222;">2.2M</div>
<div id="t80" class="t" style="left:1288.80px;top:292.11px;font-size:17.70px;line-height:17.70px;color:#18245a;font-weight:400;letter-spacing:0.718px;-webkit-text-stroke:0.18px #18245a;">Most Active APIs</div>
<div id="t81" class="t" style="left:1288.80px;top:337.80px;font-size:12.20px;line-height:12.20px;color:#18245a;font-weight:400;letter-spacing:-0.477px;-webkit-text-stroke:0.18px #18245a;">GET /</div>
<div id="t82" class="t" style="right:63.50px;top:337.81px;font-size:12.20px;line-height:12.20px;color:#18245a;font-weight:400;letter-spacing:-0.209px;-webkit-text-stroke:0.18px #18245a;">99%</div>
<div id="t83" class="t" style="left:1288.80px;top:369.01px;font-size:12.20px;line-height:12.20px;color:#18245a;font-weight:400;letter-spacing:0.089px;-webkit-text-stroke:0.18px #18245a;">GET /bin/{DYN}</div>
<div id="t84" class="t" style="right:63.50px;top:369.02px;font-size:12.20px;line-height:12.20px;color:#18245a;font-weight:400;letter-spacing:0.170px;-webkit-text-stroke:0.18px #18245a;">0%</div>
<div id="t85" class="t" style="left:1288.80px;top:399.91px;font-size:12.20px;line-height:12.20px;color:#18245a;font-weight:400;letter-spacing:-0.208px;-webkit-text-stroke:0.18px #18245a;">POST /</div>
<div id="t86" class="t" style="right:63.50px;top:399.90px;font-size:12.20px;line-height:12.20px;color:#18245a;font-weight:400;letter-spacing:0.220px;-webkit-text-stroke:0.18px #18245a;">0%</div>
<div id="t87" class="t" style="left:301.40px;top:524.01px;font-size:14.20px;line-height:14.20px;color:#6b7591;font-weight:400;letter-spacing:0.168px;-webkit-text-stroke:0.18px #6b7591;">Table</div>
<div id="t88" class="t" style="left:369.80px;top:524.01px;font-size:14.20px;line-height:14.20px;color:#4a6cf3;font-weight:400;letter-spacing:-0.084px;-webkit-text-stroke:0.18px #4a6cf3;">Graph</div>
<div id="t89" class="t" style="left:322.80px;top:573.90px;font-size:14.20px;line-height:14.20px;color:#4a6cf3;font-weight:400;letter-spacing:0.221px;-webkit-text-stroke:0.18px #4a6cf3;">Add Filter</div>
<div id="t90" class="t" style="left:875.40px;top:523.01px;font-size:14.20px;line-height:14.20px;color:#a8afc2;font-weight:400;letter-spacing:-0.051px;-webkit-text-stroke:0.18px #a8afc2;">Search</div>
<div id="t91" class="t" style="left:1135.30px;top:522.01px;font-size:14.20px;line-height:14.20px;color:#18245a;font-weight:400;letter-spacing:0.262px;-webkit-text-stroke:0.18px #18245a;">Update Schema</div>
<div id="t92" class="t" style="left:1312.40px;top:523.20px;font-size:14.20px;line-height:14.20px;color:#18245a;font-weight:400;letter-spacing:0.199px;-webkit-text-stroke:0.18px #18245a;">Download API Spec</div>
<div id="t93" class="t" style="left:1504.50px;top:523.20px;font-size:14.20px;line-height:14.20px;color:#18245a;font-weight:400;letter-spacing:0.235px;-webkit-text-stroke:0.18px #18245a;">Hide Filter</div></div>
<div style="position:absolute;left:0;top:0;width:1627px;height:950.9px;overflow:hidden;will-change:transform"><div id="t94" class="t" style="left:310.80px;top:627.90px;font-size:12.20px;line-height:12.20px;color:#6b7591;font-weight:400;letter-spacing:0.131px;-webkit-text-stroke:0.18px #6b7591;">Segment 1</div>
<div id="t95" class="t" style="left:670.20px;top:627.91px;font-size:12.20px;line-height:12.20px;color:#6b7591;font-weight:400;letter-spacing:0.131px;-webkit-text-stroke:0.18px #6b7591;">Segment 2</div>
<div id="t96" class="t" style="left:1029.60px;top:627.92px;font-size:12.20px;line-height:12.20px;color:#6b7591;font-weight:400;letter-spacing:0.131px;-webkit-text-stroke:0.18px #6b7591;">Segment 3</div>
<div id="t97" class="t" style="left:1389.00px;top:627.90px;font-size:12.20px;line-height:12.20px;color:#6b7591;font-weight:400;letter-spacing:0.132px;-webkit-text-stroke:0.18px #6b7591;">Segment 4</div>
<div id="t98" class="t" style="left:723.40px;top:704.81px;font-size:14.20px;line-height:14.20px;color:#18245a;font-weight:700;letter-spacing:0.104px;">/CFIDE -</div>
<div id="t99" class="t" style="left:723.40px;top:720.11px;font-size:14.20px;line-height:14.20px;color:#18245a;font-weight:400;letter-spacing:0.410px;-webkit-text-stroke:0.18px #18245a;">6</div>
<div id="t100" class="t" style="left:723.40px;top:794.61px;font-size:14.20px;line-height:14.20px;color:#18245a;font-weight:700;letter-spacing:0.348px;">/xsql -</div>
<div id="t101" class="t" style="left:723.40px;top:809.91px;font-size:14.20px;line-height:14.20px;color:#18245a;font-weight:400;letter-spacing:0.222px;-webkit-text-stroke:0.18px #18245a;">6</div>
<div id="t102" class="t" style="left:723.40px;top:877.31px;font-size:14.20px;line-height:14.20px;color:#18245a;font-weight:700;letter-spacing:0.411px;">/https: -</div>
<div id="t103" class="t" style="left:723.40px;top:892.60px;font-size:14.20px;line-height:14.20px;color:#18245a;font-weight:400;letter-spacing:0.217px;-webkit-text-stroke:0.18px #18245a;">4</div>
<div id="t104" class="t" style="left:1083.60px;top:695.81px;font-size:14.20px;line-height:14.20px;color:#18245a;font-weight:700;letter-spacing:0.222px;">/administrator -</div>
<div id="t105" class="t" style="left:1083.60px;top:711.11px;font-size:14.20px;line-height:14.20px;color:#18245a;font-weight:400;letter-spacing:0.274px;-webkit-text-stroke:0.18px #18245a;">3</div>
<div id="t106" class="t" style="left:1083.60px;top:758.50px;font-size:14.20px;line-height:14.20px;color:#18245a;font-weight:700;letter-spacing:0.216px;">/install.cfm</div>
<div id="t107" class="t" style="left:1083.60px;top:773.81px;font-size:14.20px;line-height:14.20px;color:#4a6cf3;font-weight:700;letter-spacing:-0.008px;">GET (Schema)</div>
<div id="t108" class="t" style="left:1083.60px;top:814.51px;font-size:14.20px;line-height:14.20px;color:#18245a;font-weight:700;letter-spacing:0.273px;">/scripts -</div>
<div id="t109" class="t" style="left:1083.60px;top:829.81px;font-size:14.20px;line-height:14.20px;color:#18245a;font-weight:400;letter-spacing:0.271px;-webkit-text-stroke:0.18px #18245a;">1</div>
<div id="t110" class="t" style="left:1083.60px;top:871.51px;font-size:14.20px;line-height:14.20px;color:#18245a;font-weight:700;letter-spacing:0.327px;">/wizards -</div>
<div id="t111" class="t" style="left:1083.60px;top:886.81px;font-size:14.20px;line-height:14.20px;color:#18245a;font-weight:400;letter-spacing:0.211px;-webkit-text-stroke:0.18px #18245a;">1</div>
<div id="t112" class="t" style="left:1083.60px;top:932.20px;font-size:14.20px;line-height:14.20px;color:#18245a;font-weight:700;letter-spacing:0.271px;">/adhocsql -</div>
<div id="t113" class="t" style="left:1083.60px;top:947.51px;font-size:14.20px;line-height:14.20px;color:#18245a;font-weight:400;letter-spacing:0.430px;-webkit-text-stroke:0.18px #18245a;">2</div>
<div id="t114" class="t" style="left:1443.60px;top:688.51px;font-size:14.20px;line-height:14.20px;color:#18245a;font-weight:700;letter-spacing:0.210px;">/archives -</div>
<div id="t115" class="t" style="left:1443.60px;top:703.80px;font-size:14.20px;line-height:14.20px;color:#18245a;font-weight:400;letter-spacing:0.378px;-webkit-text-stroke:0.18px #18245a;">1</div>
<div id="t116" class="t" style="left:1443.60px;top:745.50px;font-size:14.20px;line-height:14.20px;color:#18245a;font-weight:700;letter-spacing:0.430px;">/enter.cfm</div>
<div id="t117" class="t" style="left:1443.60px;top:760.80px;font-size:14.20px;line-height:14.20px;color:#4a6cf3;font-weight:700;letter-spacing:-0.016px;">GET (Schema)</div>
<div id="t118" class="t" style="left:1443.60px;top:801.60px;font-size:14.20px;line-height:14.20px;color:#18245a;font-weight:700;letter-spacing:0.380px;">/entman -</div>
<div id="t119" class="t" style="left:1443.60px;top:816.91px;font-size:14.20px;line-height:14.20px;color:#18245a;font-weight:400;letter-spacing:0.208px;-webkit-text-stroke:0.18px #18245a;">1</div>
<div id="t120" class="t" style="left:1443.60px;top:858.31px;font-size:14.20px;line-height:14.20px;color:#18245a;font-weight:700;letter-spacing:0.311px;">/ajax -</div>
<div id="t121" class="t" style="left:1443.60px;top:873.60px;font-size:14.20px;line-height:14.20px;color:#18245a;font-weight:400;letter-spacing:0.000px;-webkit-text-stroke:0.18px #18245a;">1</div>
<div id="t122" class="t" style="left:1443.60px;top:914.40px;font-size:14.20px;line-height:14.20px;color:#18245a;font-weight:700;letter-spacing:0.208px;">/common -</div>
<div id="t123" class="t" style="left:1443.60px;top:929.71px;font-size:14.20px;line-height:14.20px;color:#18245a;font-weight:400;letter-spacing:0.000px;-webkit-text-stroke:0.18px #18245a;">1</div></div>
<div style="position:absolute;left:1585.6px;top:783.6px;width:41.4px;height:46.8px;background:#ffffff;box-sizing:border-box;border:1px solid #e7e9f2;border-right:none;border-radius:5px 0 0 5px;box-shadow:-6px 0 14px rgba(20,30,70,0.05);"></div>
<svg style="position:absolute;left:1597px;top:797px" width="18" height="18" viewBox="0 0 18 18" fill="none" stroke="#3b5ff0" stroke-width="1.3"><circle cx="8.9" cy="8.8" r="6.9"/><path d="M7.2 7.2 C7.2 5.9 8 5.2 9 5.2 C10 5.2 10.8 5.9 10.8 6.9 C10.8 8.3 9 8.4 9 10"/><circle cx="9" cy="12.1" r="0.7" fill="#3b5ff0" stroke="none"/></svg>
<div style="position:absolute;left:1626px;top:0px;width:1px;height:965px;background:#222222;"></div>
</body></html>
